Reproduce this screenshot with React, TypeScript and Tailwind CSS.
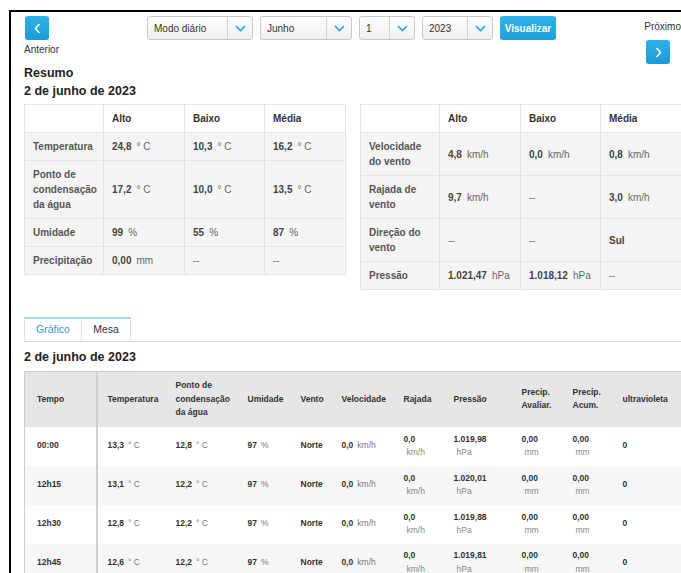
import React from 'react';

type Cell = { v: string; u?: string };

const font = "font-['Liberation_Sans',Arial,sans-serif]";

function Chevron({ dir }: { dir: 'left' | 'right' | 'down' }) {
  if (dir === 'down') {
    return (
      <svg width="11" height="7" viewBox="0 0 11 7" fill="none">
        <polyline points="1,1 5.5,5.5 10,1" stroke="#2a9fd8" strokeWidth="1.6" />
      </svg>
    );
  }
  return (
    <svg width="7" height="11" viewBox="0 0 7 11" fill="none">
      <polyline
        points={dir === 'left' ? '5.5,1 1.5,5.5 5.5,10' : '1.5,1 5.5,5.5 1.5,10'}
        stroke="#fff"
        strokeWidth="1.6"
      />
    </svg>
  );
}

function NavButton({ dir }: { dir: 'left' | 'right' }) {
  return (
    <button className="flex h-6 w-6 items-center justify-center rounded-[3px] bg-gradient-to-b from-[#2eb2e8] to-[#1a9bd6]">
      <Chevron dir={dir} />
    </button>
  );
}

function Select({ label, width }: { label: string; width: string }) {
  return (
    <div
      className={`flex h-6 items-stretch rounded-[3px] border border-[#c9c9c9] bg-gradient-to-b from-white to-[#efefef] ${width}`}
    >
      <span className="flex flex-1 items-center pl-[6px] text-[10px] text-[#333]">{label}</span>
      <span className="flex w-[25px] items-center justify-center border-l border-[#d4d4d4]">
        <Chevron dir="down" />
      </span>
    </div>
  );
}

function Val({ c }: { c: Cell }) {
  if (c.v === '--') return <span className="text-[#777]">--</span>;
  return (
    <>
      <span className="font-bold text-[#444]">{c.v}</span>
      {c.u && <span className="ml-[5px] text-[#666]">{c.u}</span>}
    </>
  );
}

const summaryLeft: { label: string; cells: Cell[] }[] = [
  { label: 'Temperatura', cells: [{ v: '24,8', u: '° C' }, { v: '10,3', u: '° C' }, { v: '16,2', u: '° C' }] },
  { label: 'Ponto de condensação da água', cells: [{ v: '17,2', u: '° C' }, { v: '10,0', u: '° C' }, { v: '13,5', u: '° C' }] },
  { label: 'Umidade', cells: [{ v: '99', u: '%' }, { v: '55', u: '%' }, { v: '87', u: '%' }] },
  { label: 'Precipitação', cells: [{ v: '0,00', u: 'mm' }, { v: '--' }, { v: '--' }] },
];

const summaryRight: { label: string; cells: Cell[] }[] = [
  { label: 'Velocidade do vento', cells: [{ v: '4,8', u: 'km/h' }, { v: '0,0', u: 'km/h' }, { v: '0,8', u: 'km/h' }] },
  { label: 'Rajada de vento', cells: [{ v: '9,7', u: 'km/h' }, { v: '--' }, { v: '3,0', u: 'km/h' }] },
  { label: 'Direção do vento', cells: [{ v: '--' }, { v: '--' }, { v: 'Sul' }] },
  { label: 'Pressão', cells: [{ v: '1.021,47', u: 'hPa' }, { v: '1.018,12', u: 'hPa' }, { v: '--' }] },
];

function SummaryTable({ rows }: { rows: { label: string; cells: Cell[] }[] }) {
  const td = 'border border-[#e6e6e6] px-[8px] py-[6px] align-middle';
  return (
    <table className="w-[321px] table-fixed border-collapse text-[10px] leading-[15px]">
      <colgroup>
        <col className="w-[79px]" />
        <col className="w-[81px]" />
        <col className="w-[80px]" />
        <col className="w-[81px]" />
      </colgroup>
      <thead>
        <tr className="bg-white">
          <th className={td}></th>
          {['Alto', 'Baixo', 'Média'].map((h) => (
            <th key={h} className={`${td} text-left font-bold text-[#333]`}>
              {h}
            </th>
          ))}
        </tr>
      </thead>
      <tbody>
        {rows.map((r) => (
          <tr key={r.label} className="bg-[#f5f5f5]">
            <td className={`${td} font-bold text-[#555]`}>{r.label}</td>
            {r.cells.map((c, i) => (
              <td key={i} className={td}>
                <Val c={c} />
              </td>
            ))}
          </tr>
        ))}
      </tbody>
    </table>
  );
}

// readings every 15 minutes
const readings = [
  ['00:00', '13,3', '12,8', '97', 'Norte', '0,0', '0,0', '1.019,98', '0,00', '0,00', '0'],
  ['12h15', '13,1', '12,2', '97', 'Norte', '0,0', '0,0', '1.020,01', '0,00', '0,00', '0'],
  ['12h30', '12,8', '12,2', '97', 'Norte', '0,0', '0,0', '1.019,88', '0,00', '0,00', '0'],
  ['12h45', '12,6', '12,2', '97', 'Norte', '0,0', '0,0', '1.019,81', '0,00', '0,00', '0'],
];

const columns: { head: string[]; w: string; unit?: string; stack?: boolean }[] = [
  { head: ['Tempo'], w: 'w-[72px]' },
  { head: ['Temperatura'], w: 'w-[69px]', unit: '° C' },
  { head: ['Ponto de', 'condensação', 'da água'], w: 'w-[72px]', unit: '° C' },
  { head: ['Umidade'], w: 'w-[53px]', unit: '%' },
  { head: ['Vento'], w: 'w-[41px]' },
  { head: ['Velocidade'], w: 'w-[62px]', unit: 'km/h' },
  { head: ['Rajada'], w: 'w-[50px]', unit: 'km/h', stack: true },
  { head: ['Pressão'], w: 'w-[68px]', unit: 'hPa', stack: true },
  { head: ['Precip.', 'Avaliar.'], w: 'w-[51px]', unit: 'mm', stack: true },
  { head: ['Precip.', 'Acum.'], w: 'w-[50px]', unit: 'mm', stack: true },
  { head: ['ultravioleta'], w: 'w-[69px]' },
];

function ReadingsTable() {
  return (
    <table className="w-[657px] table-fixed border-collapse border border-[#cfcfcf] text-[8.5px] leading-[13.5px] text-[#333]">
      <colgroup>
        {columns.map((c, i) => (
          <col key={i} className={c.w} />
        ))}
      </colgroup>
      <thead>
        <tr className="h-[55px] bg-[#e6e6e6]">
          {columns.map((c, i) => (
            <th
              key={i}
              className={`text-left align-middle font-bold ${
                i === 0 ? 'border-r-2 border-[#d0d0d0] pl-[12px]' : 'pl-[10px] pr-[3px]'
              }`}
            >
              {c.head.map((l) => (
                <div key={l}>{l}</div>
              ))}
            </th>
          ))}
        </tr>
      </thead>
      <tbody>
        {readings.map((row, r) => (
          <tr key={row[0]} className={`h-[39px] ${r % 2 ? 'bg-[#f7f7f7]' : 'bg-white'}`}>
            {row.map((v, i) => {
              const col = columns[i];
              return (
                <td
                  key={i}
                  className={`align-middle ${
                    i === 0 ? 'border-r-2 border-[#d0d0d0] pl-[12px]' : 'pl-[10px] pr-[2px]'
                  }`}
                >
                  <span className="font-bold">{v}</span>
                  {col.unit &&
                    (col.stack ? (
                      <div className="pl-[3px] text-[#888]">{col.unit}</div>
                    ) : (
                      <span className="ml-[4px] text-[#777]">{col.unit}</span>
                    ))}
                </td>
              );
            })}
          </tr>
        ))}
      </tbody>
    </table>
  );
}

export default function App() {
  return (
    <div className={`min-h-screen overflow-hidden bg-white ${font} text-[#333]`}>
      <div className="pl-[9px] pt-[10px]">
        <div className="w-[720px] border-l-2 border-t-2 border-black pl-[13px] pb-10">
          <div className="w-[657px]">
            {/* date navigation */}
            <div className="flex items-start">
              <div className="flex w-[123px] flex-col items-start pt-[4px]">
                <div className="ml-[1px]">
                  <NavButton dir="left" />
                </div>
                <span className="mt-[4px] text-[10px] leading-[12px] text-[#333]">Anterior</span>
              </div>
              <div className="flex gap-[7px] pt-[4px]">
                <Select label="Modo diário" width="w-[106px]" />
                <Select label="Junho" width="w-[92px]" />
                <Select label="1" width="w-[56px]" />
                <Select label="2023" width="w-[71px]" />
                <button className="h-6 w-[56px] rounded-[3px] bg-gradient-to-b from-[#2eb2e8] to-[#1ea0da] text-[10px] font-bold text-white">
                  Visualizar
                </button>
              </div>
              <div className="ml-auto flex flex-col items-end pt-[9px]">
                <span className="text-[10px] leading-[12px] text-[#333]">Próximo</span>
                <div className="mr-[11px] mt-[7px]">
                  <NavButton dir="right" />
                </div>
              </div>
            </div>

            <h2 className="text-[12.5px] font-bold leading-[18px] text-[#222]">Resumo</h2>
            <h3 className="text-[12.5px] font-bold leading-[18px] text-[#222]">2 de junho de 2023</h3>

            <div className="mt-[4px] flex items-start gap-[14px]">
              <SummaryTable rows={summaryLeft} />
              <SummaryTable rows={summaryRight} />
            </div>

            {/* view tabs */}
            <div className="mt-[27px] flex border-b border-[#dcdcdc] text-[10.5px]">
              <button className="h-6 w-[57px] border-l border-t-2 border-[#a9d7ef] border-l-[#e0e0e0] text-[#2f9ad3]">
                Gráfico
              </button>
              <button className="h-6 w-[50px] border-x border-t-2 border-[#a9d7ef] border-x-[#e0e0e0] bg-white text-[#333]">
                Mesa
              </button>
            </div>

            <h3 className="mt-[6px] text-[12.5px] font-bold leading-[18px] text-[#222]">2 de junho de 2023</h3>
            <div className="mt-[5px]">
              <ReadingsTable />
            </div>
          </div>
        </div>
      </div>
    </div>
  );
}
